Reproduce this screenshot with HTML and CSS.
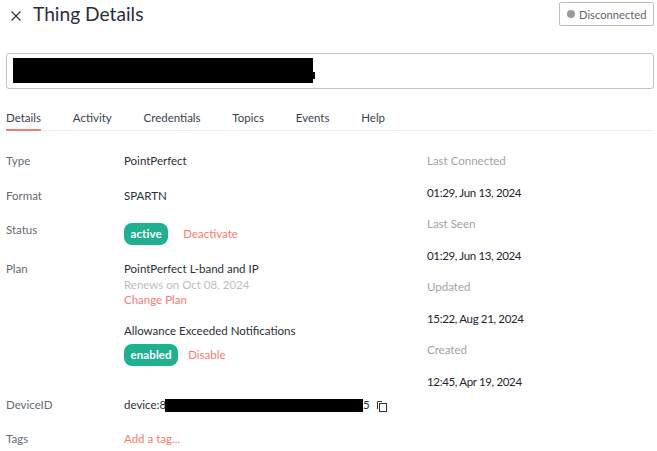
FILE: index.html
```html
<!DOCTYPE html>
<html lang="en">
<head>
<meta charset="utf-8">
<title>Thing Details</title>
<link rel="stylesheet" href="styles.css">
</head>
<body>
<div class="page">
  <header class="header">
    <div class="title-group">
      <svg class="close" viewBox="0 0 10 10" width="10" height="10"><path d="M0.5 0.5L9.5 9.5M9.5 0.5L0.5 9.5"/></svg>
      <h1 class="title">Thing Details</h1>
    </div>
    <div class="conn"><span class="dot"></span>Disconnected</div>
  </header>
  <div class="name-box"><span class="redact-name"></span><span class="redact-tail"></span></div>
  <nav class="tabs">
    <span class="tab tab-active">Details</span>
    <span class="tab">Activity</span>
    <span class="tab">Credentials</span>
    <span class="tab">Topics</span>
    <span class="tab">Events</span>
    <span class="tab">Help</span>
  </nav>
  <main class="content">
    <section class="left">
      <div class="row row-type"><span class="label">Type</span><span class="value">PointPerfect</span></div>
      <div class="row row-format"><span class="label">Format</span><span class="value">SPARTN</span></div>
      <div class="row row-status"><span class="label">Status</span>
        <div class="value inline"><span class="pill">active</span><a class="link link-gap">Deactivate</a></div>
      </div>
      <div class="row row-plan"><span class="label">Plan</span>
        <div class="value stack">
          <span class="line">PointPerfect L-band and IP</span>
          <span class="line muted">Renews on Oct 08, 2024</span>
          <a class="line link">Change Plan</a>
          <span class="line allowance">Allowance Exceeded Notifications</span>
          <div class="inline pill-row"><span class="pill">enabled</span><a class="link link-gap-sm">Disable</a></div>
        </div>
      </div>
      <div class="row row-device"><span class="label">DeviceID</span>
        <div class="value inline">device:8<span class="redact-id"></span>5
          <svg class="copy" viewBox="0 0 10 11" width="10" height="11"><path class="copy-back" d="M.5 8V.5H5"/><rect x="2.5" y="2.5" width="7" height="8"/></svg>
        </div>
      </div>
      <div class="row row-tags"><span class="label">Tags</span><a class="value link">Add a tag...</a></div>
    </section>
    <aside class="right">
      <div class="meta">Last Connected</div><div class="date">01:29, Jun 13, 2024</div>
      <div class="meta">Last Seen</div><div class="date">01:29, Jun 13, 2024</div>
      <div class="meta">Updated</div><div class="date">15:22, Aug 21, 2024</div>
      <div class="meta">Created</div><div class="date">12:45, Apr 19, 2024</div>
    </aside>
  </main>
</div>
</body>
</html>
```

FILE: styles.css
```css
* { box-sizing: border-box; }
html, body { margin: 0; padding: 0; background: #fff; }
body {
  font-family: Lato, "Open Sans", sans-serif;
  font-size: 11.5px;
  color: #2a2e3a;
  overflow: hidden;
  height: 451px;
}
.page { padding: 2px 3px 0 6px; }
.header { display: flex; justify-content: space-between; align-items: flex-start; height: 23px; }
.title-group { display: flex; align-items: center; gap: 12px; height: 24px; padding-left: 5px; }
.close { stroke: #333845; stroke-width: 1.3; fill: none; margin-top: 3px; }
.title { margin: 0; font-size: 19.2px; font-weight: 400; color: #2a2e3a; line-height: 24px; }
.conn {
  width: 95px; height: 24px; border: 1px solid #bdbdbd; border-radius: 2px;
  display: flex; align-items: center; padding-left: 7px; gap: 4px;
  font-size: 11.2px; color: #5f6470;
}
.dot { width: 8px; height: 8px; border-radius: 50%; background: #9a9a9a; }
.name-box {
  margin-top: 28px; height: 36px; width: 648px;
  border: 1px solid #c4c4c4; border-radius: 3px;
  display: flex; align-items: flex-start; padding: 4px 0 0 6px;
}
.redact-name { width: 300px; height: 25px; background: #000; }
.redact-tail { width: 2px; height: 7px; background: #000; margin-top: 14px; }
.tabs {
  display: flex; gap: 31.8px; margin-top: 19px; height: 23px;
  width: 648px; border-bottom: 1px solid #ececec;
  font-size: 11.5px; color: #3a3f4b;
}
.tab { height: 23px; line-height: 19px; }
.tab-active { border-bottom: 2px solid #f47a72; }
.content { display: flex; padding-top: 20px; }
.left { width: 421px; }
.row { display: flex; }
.label { width: 118px; flex: none; color: #666a72; line-height: 20px; }
.value { line-height: 20px; color: #2a2e3a; }
.row-type { height: 35px; }
.row-format { height: 34px; }
.row-status { height: 41px; }
.row-plan { height: 134px; }
.row-device { height: 34px; }
.inline { display: flex; align-items: center; }
.stack { display: flex; flex-direction: column; }
.line { line-height: 15.5px; display: block; }
.row-plan .label { line-height: 15px; }
.muted { color: #bdbdbd; }
.link { color: #fb7a74; }
.pill {
  display: inline-block; background: #20b090; color: #fff; font-weight: 700;
  border-radius: 8px; height: 22px; line-height: 22px; padding: 0 6.5px; letter-spacing: .1px;
}
.row-status .value { margin-top: 3px; height: 22px; }
.link-gap { margin-left: 15px; }
.link-gap-sm { margin-left: 10px; }
.allowance { margin-top: 15px; }
.pill-row { margin-top: 6px; }
.row-device .value { height: 20px; }
.redact-id { width: 198px; height: 13px; background: #000; margin: 0 0 0 -1px; }
.copy { margin-left: 7px; margin-top: 3px; fill: #fff; stroke: #333; stroke-width: 1; }
.copy-back { fill: none; }
.right { width: 200px; }
.meta { color: #a3a3a3; height: 31.5px; line-height: 20px; }
.date { color: #1f2430; height: 31.5px; line-height: 20px; letter-spacing: -.35px; }
```
